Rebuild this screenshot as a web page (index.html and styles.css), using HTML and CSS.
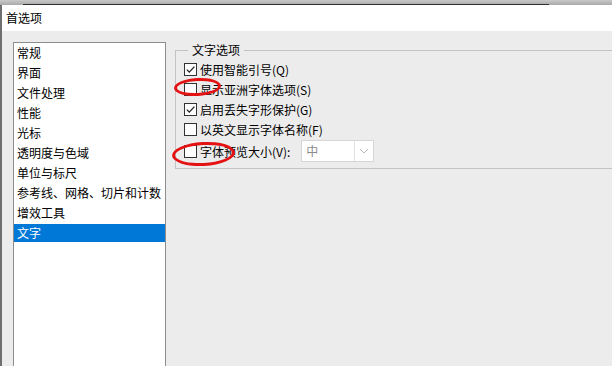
FILE: index.html
```html
<!DOCTYPE html>
<html lang="zh-CN">
<head>
<meta charset="utf-8">
<title>首选项</title>
<link rel="stylesheet" href="styles.css">
</head>
<body>
<div class="topstrip"><div class="edge"></div></div>
<div class="window">
  <div class="titlebar">首选项</div>
  <div class="content">
    <ul class="catlist">
      <li>常规</li>
      <li>界面</li>
      <li>文件处理</li>
      <li>性能</li>
      <li>光标</li>
      <li>透明度与色域</li>
      <li>单位与标尺</li>
      <li>参考线、网格、切片和计数</li>
      <li>增效工具</li>
      <li class="selected">文字</li>
    </ul>
    <fieldset class="group">
      <legend>文字选项</legend>
      <label class="row"><span class="box"><svg viewBox="0 0 11 11" width="11" height="11"><path d="M1.8 5.6 L4.3 8.1 L9.4 2.6" fill="none" stroke="#222" stroke-width="1.3"/></svg></span><span>使用智能引号(Q)</span></label>
      <label class="row"><span class="box"></span><span>显示亚洲字体选项(S)</span></label>
      <label class="row"><span class="box"><svg viewBox="0 0 11 11" width="11" height="11"><path d="M1.8 5.6 L4.3 8.1 L9.4 2.6" fill="none" stroke="#222" stroke-width="1.3"/></svg></span><span>启用丢失字形保护(G)</span></label>
      <label class="row"><span class="box"></span><span>以英文显示字体名称(F)</span></label>
      <div class="row tall"><span class="box"></span><span>字体预览大小(V):</span>
        <div class="select"><span class="value">中</span><span class="arrow"><svg viewBox="0 0 10 6" width="10" height="6"><path d="M1 1 L5 5 L9 1" fill="none" stroke="#b8b8b8" stroke-width="1"/></svg></span></div>
      </div>
    </fieldset>
  </div>
</div>
<div class="mark mark-one"></div>
<div class="mark mark-two"></div>
</body>
</html>
```
FILE: styles.css
```css
html, body {
  margin: 0;
  padding: 0;
  width: 612px;
  height: 366px;
  overflow: hidden;
}
body {
  background: #ececec;
  font-family: "Noto Sans CJK SC", "Microsoft YaHei", sans-serif;
  font-size: 12px;
  color: #000;
  position: relative;
}
.topstrip {
  height: 5px;
  background: linear-gradient(#c9c9c9, #a9a9a9);
  display: flex;
  align-items: flex-end;
}
.edge {
  margin-left: 23px;
  width: 526px;
  height: 1px;
  background: #2e2e2e;
}
.window {
  border-left: 2px solid #6f6f6f;
  height: 361px;
  box-sizing: border-box;
}
.titlebar {
  background: #fff;
  height: 26px;
  line-height: 26px;
  padding-left: 4px;
}
.content {
  display: flex;
  align-items: flex-start;
  padding: 11px 0 0 11px;
}
.catlist {
  list-style: none;
  margin: 0;
  padding: 1px 0 0 0;
  width: 151px;
  height: 322px;
  background: #fff;
  border: 1px solid #8d8d8d;
  border-bottom: none;
  flex: none;
}
.catlist li {
  height: 18px;
  line-height: 18px;
  margin-bottom: 2px;
  padding-left: 3px;
  white-space: nowrap;
}
.catlist li.selected {
  background: #0078d7;
  color: #fff;
}
.group {
  margin: 0 -30px 0 9px;
  padding: 1px 0 5px 8px;
  border: 1px solid #c3c3c3;
  flex: 1;
  min-width: 0;
}
.group legend {
  padding: 0 4px;
  margin-left: 4px;
  line-height: 16px;
}
.row {
  display: flex;
  align-items: center;
  height: 20px;
}
.row.tall {
  height: 24px;
}
.box {
  width: 11px;
  height: 11px;
  border: 1px solid #333;
  background: #fff;
  margin-right: 3px;
  flex: none;
  display: flex;
}
.select {
  margin-left: 11px;
  width: 71px;
  height: 20px;
  border: 1px solid #d6d6d6;
  background: #fff;
  display: flex;
  align-items: stretch;
}
.select .value {
  flex: 1;
  padding-left: 4px;
  line-height: 20px;
  color: #8a8a8a;
}
.select .arrow {
  width: 18px;
  border-left: 1px solid #e2e2e2;
  display: flex;
  align-items: center;
  justify-content: center;
}
.mark {
  position: absolute;
  border: 3px solid #e41212;
  border-radius: 50%;
  box-sizing: border-box;
}
.mark-one {
  left: 174px;
  top: 78px;
  width: 47px;
  height: 18px;
  transform: rotate(-3deg);
}
.mark-two {
  left: 172px;
  top: 142px;
  width: 63px;
  height: 24px;
  transform: rotate(-3deg);
}
```
